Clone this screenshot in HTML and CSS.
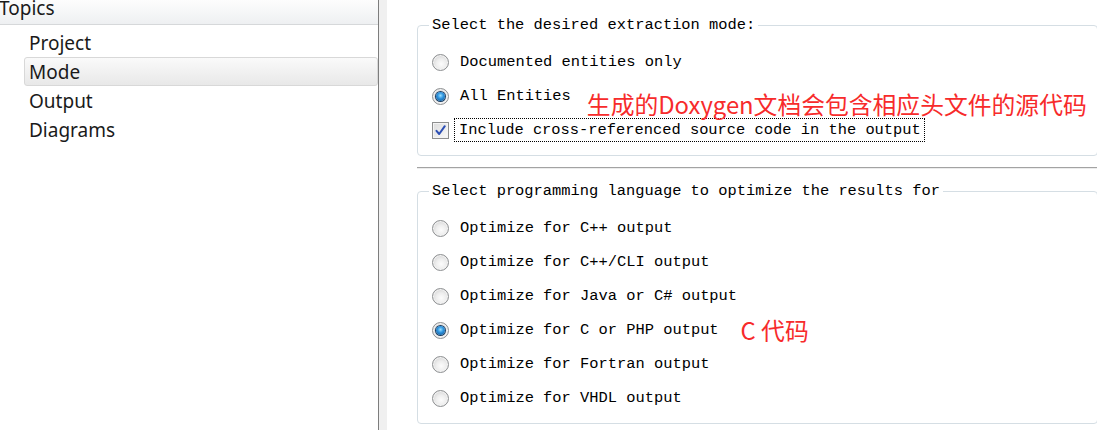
FILE: index.html
```html
<!DOCTYPE html>
<html lang="en">
<head>
<meta charset="utf-8">
<title>Doxygen Wizard - Mode</title>
<link rel="stylesheet" href="styles.css">
</head>
<body>
<div class="app">
  <aside class="sidebar">
    <div class="sidebar-header"><span class="header-text">Topics</span></div>
    <ul class="topics">
      <li class="topic">Project</li>
      <li class="topic selected">Mode</li>
      <li class="topic">Output</li>
      <li class="topic">Diagrams</li>
    </ul>
  </aside>
  <div class="splitter"></div>
  <main class="main">
    <fieldset class="group group-mode">
      <legend class="legend">Select the desired extraction mode:</legend>
      <div class="row"><span class="radio"></span><span class="label">Documented entities only</span></div>
      <div class="row"><span class="radio checked"></span><span class="label">All Entities</span><span class="note note-shift">生成的Doxygen文档会包含相应头文件的源代码</span></div>
      <div class="row"><span class="checkbox"><svg viewBox="0 0 13 13" width="13" height="13"><path d="M2.5 6.8 L5.2 10 L10.8 2.2" fill="none" stroke="#2d4fb4" stroke-width="2" stroke-linecap="round" stroke-linejoin="round"/></svg></span><span class="label focus">Include cross-referenced source code in the output</span></div>
    </fieldset>
    <div class="separator"></div>
    <fieldset class="group group-lang">
      <legend class="legend">Select programming language to optimize the results for</legend>
      <div class="row"><span class="radio"></span><span class="label">Optimize for C++ output</span></div>
      <div class="row"><span class="radio"></span><span class="label">Optimize for C++/CLI output</span></div>
      <div class="row"><span class="radio"></span><span class="label">Optimize for Java or C# output</span></div>
      <div class="row"><span class="radio checked"></span><span class="label">Optimize for C or PHP output</span><span class="note note-c">C 代码</span></div>
      <div class="row"><span class="radio"></span><span class="label">Optimize for Fortran output</span></div>
      <div class="row"><span class="radio"></span><span class="label">Optimize for VHDL output</span></div>
    </fieldset>
  </main>
</div>
</body>
</html>
```

FILE: styles.css
```css
html, body {
  margin: 0;
  padding: 0;
  background: #ffffff;
}

body {
  width: 1097px;
  height: 430px;
  overflow: hidden;
}

.app {
  display: flex;
  height: 430px;
}

/* ---------- sidebar ---------- */
.sidebar {
  width: 378px;
  flex: 0 0 auto;
  border-right: 1px solid #7d7d7d;
  background: #ffffff;
  font-family: "Noto Sans", "Open Sans", sans-serif;
  font-size: 19px;
  color: #1a1a1a;
}

.sidebar-header {
  height: 24px;
  border-bottom: 1px solid #d6d8da;
  background: linear-gradient(#fdfdfd, #eef0f2);
  box-sizing: content-box;
}

.header-text {
  display: block;
  line-height: 16px;
  padding-left: 0;
  margin-left: -1px;
}

.topics {
  list-style: none;
  margin: 3px 0 0 0;
  padding: 0;
}

.topic {
  margin-left: 24px;
  height: 27px;
  line-height: 28px;
  padding-left: 4px;
  border: 1px solid transparent;
  border-radius: 3px;
}

.topic.selected {
  border-color: #d8d8d8;
  background: linear-gradient(#fafafa, #e8e8e8);
}

.splitter {
  width: 8px;
  flex: 0 0 auto;
  background: #f0f0f0;
}

/* ---------- main ---------- */
.main {
  flex: 1;
  padding: 16px 9px 0 30px;
  font-family: "Liberation Mono", "DejaVu Sans Mono", monospace;
  font-size: 15.4px;
  color: #000000;
}

.group {
  margin: 0;
  border: 1px solid #d5dee4;
  border-radius: 4px;
  padding: 11px 10px 8px 14px;
}

.legend {
  padding: 0 3px;
  margin-left: -3px;
  line-height: 18px;
}

.row {
  display: flex;
  align-items: center;
  height: 34px;
  white-space: nowrap;
}

.label {
  margin-left: 11px;
  line-height: 18px;
}

.radio {
  position: relative;
  width: 15px;
  height: 15px;
  flex: 0 0 auto;
  border-radius: 50%;
  border: 1px solid #8d8f91;
  background: radial-gradient(circle at 55% 60%, #fcfcfc 0, #eeeeee 40%, #c6c6c6 100%);
  box-shadow: inset 0 0 0 1px #f3f3f3;
}

.radio.checked::after {
  content: "";
  position: absolute;
  left: 3px;
  top: 3px;
  width: 9px;
  height: 9px;
  border-radius: 50%;
  background: radial-gradient(circle at 50% 40%, #9be0ff 0, #2f95e0 40%, #0b4a85 100%);
  box-shadow: 0 0 0 1px #1c3f63;
}

.checkbox {
  width: 15px;
  height: 15px;
  flex: 0 0 auto;
  border: 1px solid #8e8f8f;
  background: linear-gradient(135deg, #dcdcdc, #fafafa);
  box-shadow: inset 0 0 0 1px #f4f4f4;
  display: flex;
  align-items: center;
  justify-content: center;
}

.label.focus {
  margin-left: 5px;
  border: 1px dotted #000000;
  padding: 2px 3px 2px 4px;
}

.note {
  font-family: "Noto Sans CJK SC", "Noto Sans", sans-serif;
  color: #f72b2b;
  font-size: 23.8px;
  line-height: 26px;
}

.note-shift {
  position: relative;
  top: 8px;
  margin-left: 16px;
}

.note-c {
  margin-left: 22px;
}

.separator {
  margin: 11px 0 13px 0;
  height: 1px;
  background: #a3a3a3;
  border-bottom: 1px solid #ececec;
}
```
